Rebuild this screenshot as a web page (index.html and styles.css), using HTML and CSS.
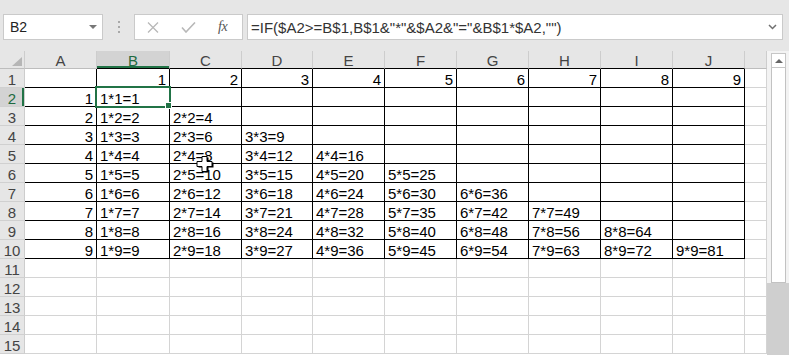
FILE: index.html
```html
<!DOCTYPE html>
<html lang="zh-CN">
<head>
  <meta charset="UTF-8">
  <title>九九乘法表</title>
  <link rel="stylesheet" href="styles.css">
</head>
<body>
  <div class="app">
    <div class="formula-bar">
      <div class="name-box">
        <span>B2</span>
        <span class="caret"></span>
      </div>
      <div class="grip"><i></i><i></i><i></i></div>
      <div class="fx-box">
        <svg class="icon-cancel" width="12" height="11" viewBox="0 0 12 11"><path d="M1 0.5L11 10.5M11 0.5L1 10.5" stroke="#b8b8b8" stroke-width="1.3" fill="none"/></svg>
        <svg class="icon-enter" width="15" height="11" viewBox="0 0 15 11"><path d="M1 5.5L5 10L14 0.5" stroke="#b8b8b8" stroke-width="1.6" fill="none"/></svg>
        <span class="fx">fx</span>
      </div>
      <div class="formula-input">
        <span>=IF($A2&gt;=B$1,B$1&amp;"*"&amp;$A2&amp;"="&amp;B$1*$A2,"")</span>
        <svg width="9" height="6" viewBox="0 0 9 6"><path d="M1 1L4.5 4.5L8 1" stroke="#707070" stroke-width="1.5" fill="none"/></svg>
      </div>
    </div>

    <div class="workspace">
      <div class="sheet">
        <div class="corner"><span></span></div>
        <div class="ch">A</div><div class="ch edge sel">B</div><div class="ch edge">C</div><div class="ch edge">D</div><div class="ch edge">E</div><div class="ch edge">F</div><div class="ch edge">G</div><div class="ch edge">H</div><div class="ch edge">I</div><div class="ch edge">J</div><div class="ch"></div>

        <div class="rh">1</div>
        <div class="c a1"></div><div class="c b n">1</div><div class="c b n">2</div><div class="c b n">3</div><div class="c b n">4</div><div class="c b n">5</div><div class="c b n">6</div><div class="c b n">7</div><div class="c b n">8</div><div class="c b n">9</div><div class="c"></div>

        <div class="rh sel">2</div>
        <div class="c b n">1</div><div class="c b active">1*1=1</div><div class="c b"></div><div class="c b"></div><div class="c b"></div><div class="c b"></div><div class="c b"></div><div class="c b"></div><div class="c b"></div><div class="c b"></div><div class="c"></div>

        <div class="rh">3</div>
        <div class="c b n">2</div><div class="c b">1*2=2</div><div class="c b">2*2=4</div><div class="c b"></div><div class="c b"></div><div class="c b"></div><div class="c b"></div><div class="c b"></div><div class="c b"></div><div class="c b"></div><div class="c"></div>

        <div class="rh">4</div>
        <div class="c b n">3</div><div class="c b">1*3=3</div><div class="c b">2*3=6</div><div class="c b">3*3=9</div><div class="c b"></div><div class="c b"></div><div class="c b"></div><div class="c b"></div><div class="c b"></div><div class="c b"></div><div class="c"></div>

        <div class="rh">5</div>
        <div class="c b n">4</div><div class="c b">1*4=4</div><div class="c b">2*4=8</div><div class="c b">3*4=12</div><div class="c b">4*4=16</div><div class="c b"></div><div class="c b"></div><div class="c b"></div><div class="c b"></div><div class="c b"></div><div class="c"></div>

        <div class="rh">6</div>
        <div class="c b n">5</div><div class="c b">1*5=5</div><div class="c b">2*5=10</div><div class="c b">3*5=15</div><div class="c b">4*5=20</div><div class="c b">5*5=25</div><div class="c b"></div><div class="c b"></div><div class="c b"></div><div class="c b"></div><div class="c"></div>

        <div class="rh">7</div>
        <div class="c b n">6</div><div class="c b">1*6=6</div><div class="c b">2*6=12</div><div class="c b">3*6=18</div><div class="c b">4*6=24</div><div class="c b">5*6=30</div><div class="c b">6*6=36</div><div class="c b"></div><div class="c b"></div><div class="c b"></div><div class="c"></div>

        <div class="rh">8</div>
        <div class="c b n">7</div><div class="c b">1*7=7</div><div class="c b">2*7=14</div><div class="c b">3*7=21</div><div class="c b">4*7=28</div><div class="c b">5*7=35</div><div class="c b">6*7=42</div><div class="c b">7*7=49</div><div class="c b"></div><div class="c b"></div><div class="c"></div>

        <div class="rh">9</div>
        <div class="c b n">8</div><div class="c b">1*8=8</div><div class="c b">2*8=16</div><div class="c b">3*8=24</div><div class="c b">4*8=32</div><div class="c b">5*8=40</div><div class="c b">6*8=48</div><div class="c b">7*8=56</div><div class="c b">8*8=64</div><div class="c b"></div><div class="c"></div>

        <div class="rh">10</div>
        <div class="c b n">9</div><div class="c b">1*9=9</div><div class="c b">2*9=18</div><div class="c b">3*9=27</div><div class="c b">4*9=36</div><div class="c b">5*9=45</div><div class="c b">6*9=54</div><div class="c b">7*9=63</div><div class="c b">8*9=72</div><div class="c b">9*9=81</div><div class="c"></div>

        <div class="rh">11</div>
        <div class="c"></div><div class="c"></div><div class="c"></div><div class="c"></div><div class="c"></div><div class="c"></div><div class="c"></div><div class="c"></div><div class="c"></div><div class="c"></div><div class="c"></div>

        <div class="rh">12</div>
        <div class="c"></div><div class="c"></div><div class="c"></div><div class="c"></div><div class="c"></div><div class="c"></div><div class="c"></div><div class="c"></div><div class="c"></div><div class="c"></div><div class="c"></div>

        <div class="rh">13</div>
        <div class="c"></div><div class="c"></div><div class="c"></div><div class="c"></div><div class="c"></div><div class="c"></div><div class="c"></div><div class="c"></div><div class="c"></div><div class="c"></div><div class="c"></div>

        <div class="rh">14</div>
        <div class="c"></div><div class="c"></div><div class="c"></div><div class="c"></div><div class="c"></div><div class="c"></div><div class="c"></div><div class="c"></div><div class="c"></div><div class="c"></div><div class="c"></div>

        <div class="rh">15</div>
        <div class="c"></div><div class="c"></div><div class="c"></div><div class="c"></div><div class="c"></div><div class="c"></div><div class="c"></div><div class="c"></div><div class="c"></div><div class="c"></div><div class="c"></div>

        <!-- mouse pointer over C5 -->
        <svg class="pointer" width="18" height="17" viewBox="0 0 18 17">
          <path d="M7.5 1.5H12.5V6.5H17.5V11.5H12.5V16.5H7.5V11.5H2.5V6.5H7.5Z" fill="#000"/>
          <path d="M6 0.5H11V5.5H16V10.5H11V15.5H6V10.5H1V5.5H6Z" fill="#fff" stroke="#000" stroke-width="1"/>
        </svg>
      </div>

      <div class="vscroll">
        <div class="sb-upper">
          <div class="sb-up"><span></span></div>
          <div class="sb-thumb"></div>
        </div>
        <div class="sb-track"></div>
      </div>
    </div>
  </div>
</body>
</html>
```

FILE: styles.css
```css
body {
  margin: 0;
  background-color: #fff;
  font-family: 'Liberation Sans', Arial, sans-serif;
  color: #000;
}

.app {
  width: 789px;
  height: 355px;
  overflow: hidden;
}

/* formula bar */

.formula-bar {
  height: 51px;
  box-sizing: border-box;
  padding: 14px 6px 0 3px;
  background-color: #e6e6e6;
  display: flex;
  align-items: flex-start;
}

.name-box, .fx-box, .formula-input {
  height: 26px;
  box-sizing: border-box;
  background-color: #fff;
  border: 1px solid #cacaca;
  display: flex;
  align-items: center;
}

.name-box {
  width: 100px;
  justify-content: space-between;
  padding: 0 5px 0 6px;
  font-size: 14px;
  color: #222;
}

.caret {
  width: 0;
  height: 0;
  border-left: 4px solid transparent;
  border-right: 4px solid transparent;
  border-top: 4px solid #777;
}

.grip {
  width: 31px;
  height: 26px;
  display: flex;
  flex-direction: column;
  align-items: center;
  justify-content: center;
  gap: 3px;
}

.grip i {
  width: 2px;
  height: 2px;
  background-color: #a8a8a8;
}

.fx-box {
  width: 109px;
  padding-left: 12px;
}

.icon-cancel {
  margin-right: 22px;
}

.icon-enter {
  margin-right: 22px;
}

.fx {
  font-family: 'Liberation Serif', serif;
  font-style: italic;
  font-size: 14px;
  color: #555;
  letter-spacing: -0.5px;
}

.formula-input {
  width: 536px;
  margin-left: 4px;
  justify-content: space-between;
  padding: 0 5px 0 3px;
  font-size: 15px;
  color: #333;
}

/* sheet */

.workspace {
  display: flex;
}

.sheet {
  position: relative;
  width: 767px;
  display: grid;
  grid-template-columns: 25px 72px 73px 72px 71px 72px 72px 72px 72px 72px 72px 22px;
  grid-template-rows: 18px;
  grid-auto-rows: 19px;
  font-size: 15px;
  line-height: 18px;
}

.sheet > div {
  box-sizing: border-box;
  white-space: nowrap;
  overflow: hidden;
}

.corner, .ch, .rh {
  background-color: #e6e6e6;
  color: #444;
  border-right: 1px solid #cdcdcd;
  border-bottom: 1px solid #bdbdbd;
}

.corner {
  display: flex;
  align-items: flex-end;
  justify-content: flex-end;
  padding: 0 2px 2px 0;
}

.corner span {
  width: 0;
  height: 0;
  border-left: 10px solid transparent;
  border-bottom: 9px solid #b6b6b6;
}

.ch {
  text-align: center;
  padding-top: 1px;
}

.ch.edge {
  border-bottom-color: #000;
}

.rh {
  text-align: center;
  padding-top: 2px;
  border-bottom-color: #d0d0d0;
}

.sel {
  background-color: #d3d3d3;
  color: #1e6b41;
}

.ch.sel {
  box-shadow: inset 0 -2px 0 #217346;
}

.rh.sel {
  box-shadow: inset -2px 0 0 #217346;
}

.c {
  padding: 2px 3px 0;
  border-right: 1px solid #d4d4d4;
  border-bottom: 1px solid #d4d4d4;
}

.c.b, .c.a1 {
  border-right-color: #000;
  border-bottom-color: #000;
}

.n {
  text-align: right;
}

.c.active {
  position: relative;
  overflow: visible;
}

.c.active::after {
  content: '';
  position: absolute;
  left: -2px;
  top: -2px;
  right: -2px;
  bottom: -2px;
  border: 2px solid #217346;
}

.c.active::before {
  content: '';
  position: absolute;
  right: -3px;
  bottom: -3px;
  width: 5px;
  height: 5px;
  background-color: #217346;
  border: 1px solid #fff;
  z-index: 1;
}

.pointer {
  position: absolute;
  left: 196px;
  top: 105px;
}

/* vertical scrollbar */

.vscroll {
  width: 22px;
  height: 304px;
  display: flex;
  flex-direction: column;
}

.sb-upper {
  background-color: #f3f3f3;
  padding: 2px 3px 0 4px;
}

.sb-up {
  height: 15px;
  box-sizing: border-box;
  border: 1px solid #c6c6c6;
  background-color: #fff;
  display: flex;
  align-items: center;
  justify-content: center;
}

.sb-up span {
  width: 0;
  height: 0;
  border-left: 4px solid transparent;
  border-right: 4px solid transparent;
  border-bottom: 4px solid #666;
}

.sb-thumb {
  height: 215px;
  box-sizing: border-box;
  border: 1px solid #c2c2c2;
  border-top: none;
  background-color: #fff;
}

.sb-track {
  flex: 1;
  background-color: #cfcfcf;
}
```
